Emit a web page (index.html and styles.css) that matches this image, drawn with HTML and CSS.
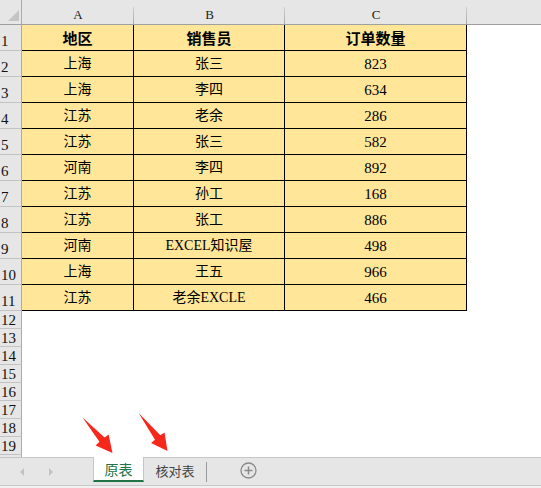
FILE: index.html
```html
<!DOCTYPE html>
<html lang="zh">
<head>
<meta charset="utf-8">
<title>Sheet</title>
<link rel="stylesheet" href="styles.css">
</head>
<body>
<div class="app">
  <div class="sheet">
    <div class="grid">
      <div class="corner"><span class="tri"></span></div>
      <div class="ch">A</div>
      <div class="ch">B</div>
      <div class="ch">C</div>
      <div class="ch ch-rest"></div>

      <div class="rh">1</div><div class="c hd">地区</div><div class="c hd">销售员</div><div class="c hd">订单数量</div><div class="e"></div>
      <div class="rh">2</div><div class="c">上海</div><div class="c">张三</div><div class="c num">823</div><div class="e"></div>
      <div class="rh">3</div><div class="c">上海</div><div class="c">李四</div><div class="c num">634</div><div class="e"></div>
      <div class="rh">4</div><div class="c">江苏</div><div class="c">老余</div><div class="c num">286</div><div class="e"></div>
      <div class="rh">5</div><div class="c">江苏</div><div class="c">张三</div><div class="c num">582</div><div class="e"></div>
      <div class="rh">6</div><div class="c">河南</div><div class="c">李四</div><div class="c num">892</div><div class="e"></div>
      <div class="rh">7</div><div class="c">江苏</div><div class="c">孙工</div><div class="c num">168</div><div class="e"></div>
      <div class="rh">8</div><div class="c">江苏</div><div class="c">张工</div><div class="c num">886</div><div class="e"></div>
      <div class="rh">9</div><div class="c">河南</div><div class="c mix">EXCEL知识屋</div><div class="c num">498</div><div class="e"></div>
      <div class="rh">10</div><div class="c">上海</div><div class="c">王五</div><div class="c num">966</div><div class="e"></div>
      <div class="rh">11</div><div class="c">江苏</div><div class="c mix">老余EXCLE</div><div class="c num">466</div><div class="e"></div>

      <div class="rh sm">12</div><div class="e span4"></div>
      <div class="rh sm">13</div><div class="e span4"></div>
      <div class="rh sm">14</div><div class="e span4"></div>
      <div class="rh sm">15</div><div class="e span4"></div>
      <div class="rh sm">16</div><div class="e span4"></div>
      <div class="rh sm">17</div><div class="e span4"></div>
      <div class="rh sm">18</div><div class="e span4"></div>
      <div class="rh sm">19</div><div class="e span4"></div>
      <div class="rh sm"></div><div class="e span4"></div>
    </div>
  </div>

  <div class="tabbar">
    <div class="nav">
      <span class="nav-l"></span>
      <span class="nav-r"></span>
    </div>
    <div class="tab active">原表</div>
    <div class="tab">核对表</div>
    <div class="tab-sep"></div>
    <div class="add">
      <svg width="17" height="17" viewBox="0 0 17 17">
        <circle cx="8.5" cy="8.5" r="7.5" fill="none" stroke="#8a8a8a" stroke-width="1.3"/>
        <path d="M8.5 4.5v8M4.5 8.5h8" stroke="#8a8a8a" stroke-width="1.5"/>
      </svg>
    </div>
  </div>
  <div class="status"></div>

  <svg class="arrows" width="541" height="488" viewBox="0 0 541 488">
    <polygon points="82.5,417.5 104.6,437.6 108.6,434.6 112.5,453 95.6,445.6 99.4,441.8" fill="#f7281b"/>
    <polygon points="138.6,413 160.3,435.3 164.5,432.4 167.5,451 151,442.9 155,439.8" fill="#f7281b"/>
  </svg>
</div>
</body>
</html>
```

FILE: styles.css
```css
* { box-sizing: border-box; }
html, body { margin: 0; padding: 0; background: #fff; }
body { width: 541px; height: 488px; overflow: hidden; }

.app {
  position: relative;
  width: 541px;
  height: 488px;
  display: flex;
  flex-direction: column;
  font-family: "Liberation Serif", "Noto Sans CJK SC", serif;
  color: #000;
}

.sheet {
  height: 457px;
  overflow: hidden;
  flex: none;
}

.grid {
  display: grid;
  grid-template-columns: 22px 112px 151px 182px 1fr;
  grid-template-rows: 25px repeat(11, 26px) repeat(9, 18px);
}

.corner {
  background: #e6e6e6;
  border-right: 1px solid #ababab;
  border-bottom: 1px solid #9f9f9f;
  position: relative;
}
.corner .tri {
  position: absolute;
  left: 8px;
  top: 10px;
  width: 11px;
  height: 11px;
  background: #c4c4c4;
  clip-path: polygon(100% 0, 100% 100%, 0 100%);
}

.ch {
  background:
    linear-gradient(#cfcfcf, #a9a9a9) right bottom / 1px 17px no-repeat,
    #e6e6e6;
  border-bottom: 1px solid #9f9f9f;
  display: flex;
  align-items: center;
  justify-content: center;
  font-family: "Liberation Serif", serif;
  font-size: 13px;
  color: #222;
  padding-top: 5px;
}
.ch-rest { background: #e6e6e6; }

.rh {
  background: #e6e6e6;
  border-right: 1px solid #ababab;
  border-bottom: 1px solid #c3c3c3;
  display: flex;
  align-items: flex-end;
  justify-content: flex-start;
  font-family: "Liberation Serif", serif;
  font-size: 15px;
  line-height: 14px;
  padding: 0 0 2px 1px;
  color: #111;
}
.rh.sm { padding-bottom: 1px; }

.c {
  background: #ffe699;
  border-right: 1px solid #000;
  border-bottom: 1px solid #000;
  display: flex;
  align-items: center;
  justify-content: center;
  font-size: 14px;
  line-height: 16px;
  white-space: nowrap;
  padding-top: 1px;
}
.c.hd {
  font-family: "Noto Sans CJK SC", sans-serif;
  font-weight: bold;
  font-size: 15px;
}
.c.num { font-size: 15px; }

.e { background: #fff; }
.span4 { grid-column: span 4; }

.tabbar {
  height: 28px;
  flex: none;
  background: #e6e6e6;
  border-top: 1px solid #c6c6c6;
  display: flex;
  align-items: stretch;
  font-family: "Noto Sans CJK SC", sans-serif;
  font-size: 13px;
}

.nav {
  width: 93px;
  display: flex;
  align-items: center;
  padding-left: 20px;
  gap: 25px;
}
.nav-l, .nav-r {
  width: 0;
  height: 0;
  border-top: 4px solid transparent;
  border-bottom: 4px solid transparent;
}
.nav-l { border-right: 4px solid #c2c2c2; }
.nav-r { border-left: 4px solid #c2c2c2; }

.tab {
  display: flex;
  align-items: center;
  justify-content: center;
  color: #444;
  width: 62px;
  height: 25px;
  padding-bottom: 1px;
}
.tab.active {
  width: 51px;
  margin-top: -1px;
  height: 25px;
  background: #fff;
  color: #217346;
  border-left: 1px solid #c6c6c6;
  border-right: 1px solid #c6c6c6;
  border-bottom: 2px solid #217346;
  font-size: 14px;
  padding-bottom: 0;
}
.tab-sep {
  width: 1px;
  background: #9a9a9a;
  margin: 4px 0 3px;
}
.add {
  display: flex;
  align-items: center;
  padding-left: 33px;
  padding-bottom: 2px;
}

.status {
  flex: 1;
  background: #f1f1f1;
  border-top: 1px solid #c8c8c8;
}

.arrows {
  position: absolute;
  left: 0;
  top: 0;
  pointer-events: none;
}
```
